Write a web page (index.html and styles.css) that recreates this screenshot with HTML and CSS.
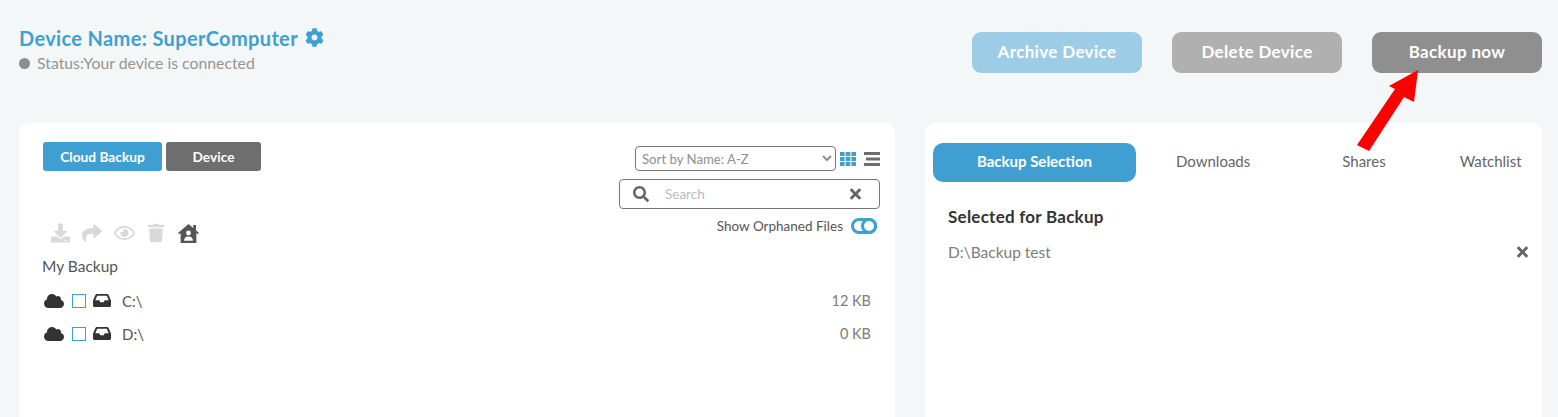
FILE: index.html
```html
<!DOCTYPE html>
<html lang="en">
<head>
<meta charset="utf-8">
<title>Device</title>
<link rel="stylesheet" href="styles.css">
</head>
<body>
<header class="page-head">
  <div class="device">
    <h1 class="device-name">Device Name: SuperComputer
      <svg class="cog" viewBox="0 0 512 512"><path d="M487.4 315.7l-42.6-24.6c4.3-23.2 4.3-47 0-70.2l42.6-24.6c4.9-2.8 7.1-8.6 5.5-14-11.1-35.6-30-67.8-54.7-94.6-3.8-4.1-10-5.1-14.8-2.3L380.8 110c-17.9-15.4-38.5-27.3-60.8-35.1V25.8c0-5.6-3.9-10.5-9.4-11.7-36.7-8.2-74.3-7.8-109.2 0-5.5 1.2-9.4 6.1-9.4 11.7V75c-22.2 7.9-42.8 19.8-60.8 35.1L88.7 85.5c-4.9-2.8-11-1.9-14.8 2.3-24.7 26.7-43.6 58.9-54.7 94.6-1.7 5.4.6 11.2 5.5 14L67.3 221c-4.3 23.2-4.3 47 0 70.2l-42.6 24.6c-4.9 2.8-7.1 8.6-5.5 14 11.1 35.6 30 67.8 54.7 94.6 3.8 4.1 10 5.1 14.8 2.3l42.6-24.6c17.9 15.4 38.5 27.3 60.8 35.1v49.2c0 5.6 3.9 10.5 9.4 11.7 36.7 8.2 74.3 7.8 109.2 0 5.5-1.2 9.4-6.1 9.4-11.7v-49.2c22.2-7.9 42.8-19.8 60.8-35.1l42.6 24.6c4.9 2.8 11 1.9 14.8-2.3 24.7-26.7 43.6-58.9 54.7-94.6 1.5-5.5-.7-11.3-5.6-14.1zM256 336c-44.1 0-80-35.9-80-80s35.9-80 80-80 80 35.9 80 80-35.9 80-80 80z"/></svg>
    </h1>
    <div class="status"><span class="dot"></span>Status:Your device is connected</div>
  </div>
  <div class="actions">
    <button class="action archive">Archive Device</button>
    <button class="action delete">Delete Device</button>
    <button class="action backup">Backup now</button>
  </div>
</header>

<main class="panels">
  <section class="card files">
    <div class="files-top">
      <div class="source-tabs">
        <button class="source on">Cloud Backup</button>
        <button class="source off">Device</button>
      </div>
      <div class="controls">
        <div class="sort-row">
          <select class="sort"><option>Sort by Name: A-Z</option></select>
          <svg class="view" viewBox="0 0 16 14"><path fill="#3f9fd3" d="M0 0h4.600v4H0zM5.700 0h4.600v4H5.700zM11.400 0H16v4h-4.600zM0 5h4.600v4H0zM5.700 5h4.600v4H5.700zM11.400 5H16v4h-4.600zM0 10h4.600v4H0zM5.700 10h4.600v4H5.700zM11.400 10H16v4h-4.600z"/></svg>
          <svg class="view" viewBox="0 0 16 14"><path fill="#6e6e6e" d="M0 0h16v3H0zM2 5.500h14v3H2zM0 11h16v3H0z"/></svg>
        </div>
        <label class="search">
          <svg class="search-icon" viewBox="0 0 512 512"><path d="M505 442.7L405.3 343c-4.5-4.500-10.600-7-17-7H372c27.600-35.300 44-79.700 44-128C416 93.100 322.900 0 208 0S0 93.100 0 208s93.100 208 208 208c48.300 0 92.700-16.400 128-44v16.300c0 6.400 2.500 12.500 7 17l99.700 99.700c9.400 9.400 24.600 9.400 33.900 0l28.300-28.300c9.400-9.400 9.400-24.600.1-34zM208 336c-70.700 0-128-57.200-128-128 0-70.700 57.200-128 128-128 70.700 0 128 57.200 128 128 0 70.700-57.200 128-128 128z"/></svg>
          <input class="search-input" placeholder="Search">
          <svg class="x" viewBox="0 0 352 512"><path d="M242.72 256l100.07-100.07c12.28-12.28 12.28-32.19 0-44.48l-22.24-22.24c-12.28-12.28-32.19-12.28-44.48 0L176 189.28 75.93 89.21c-12.28-12.28-32.19-12.28-44.48 0L9.21 111.45c-12.28 12.28-12.28 32.19 0 44.48L109.28 256 9.21 356.07c-12.28 12.28-12.28 32.19 0 44.48l22.24 22.24c12.28 12.28 32.2 12.28 44.48 0L176 322.72l100.07 100.07c12.28 12.28 32.2 12.28 44.48 0l22.24-22.24c12.28-12.28 12.28-32.19 0-44.48L242.72 256z"/></svg>
        </label>
      </div>
    </div>
    <div class="tools-row">
      <div class="tools">
        <svg class="tool dl" viewBox="0 0 512 512"><path d="M216 0h80c13.3 0 24 10.7 24 24v168h87.7c17.8 0 26.7 21.5 14.1 34.1L269.7 378.3c-7.5 7.5-19.8 7.5-27.3 0L90.1 226.1c-12.6-12.6-3.7-34.1 14.1-34.1H192V24c0-13.3 10.7-24 24-24zm296 376v112c0 13.3-10.7 24-24 24H24c-13.3 0-24-10.7-24-24V376c0-13.3 10.7-24 24-24h146.7l49 49c20.1 20.1 52.5 20.1 72.6 0l49-49H488c13.3 0 24 10.7 24 24zm-124 88c0-11-9-20-20-20s-20 9-20 20 9 20 20 20 20-9 20-20zm64 0c0-11-9-20-20-20s-20 9-20 20 9 20 20 20 20-9 20-20z"/></svg>
        <svg class="tool share" viewBox="0 0 512 512"><path d="M503.691 189.836L327.687 37.851C312.281 24.546 288 35.347 288 56.015v80.053C127.371 137.907 0 170.1 0 322.326c0 61.441 39.581 122.309 83.333 154.132 13.653 9.931 33.111-2.533 28.077-18.631C66.066 312.814 132.917 274.316 288 272.085V360c0 20.7 24.3 31.453 39.687 18.164l176.004-152c11.071-9.562 11.086-26.753 0-36.328z"/></svg>
        <svg class="tool eye" viewBox="0 0 576 512"><path d="M288 144a110.94 110.94 0 0 0-31.24 5 55.4 55.4 0 0 1 7.24 27 56 56 0 0 1-56 56 55.4 55.4 0 0 1-27-7.24A111.71 111.71 0 1 0 288 144zm284.52 97.4C518.29 135.59 410.93 64 288 64S57.68 135.64 3.48 241.41a32.35 32.35 0 0 0 0 29.19C57.71 376.41 165.07 448 288 448s230.32-71.64 284.52-177.41a32.35 32.35 0 0 0 0-29.19zM288 400c-98.65 0-189.09-55-237.93-144C98.91 167 189.34 112 288 112s189.09 55 237.93 144C477.1 345 386.66 400 288 400z"/></svg>
        <svg class="tool trash" viewBox="0 0 448 512"><path d="M432 32H312l-9.4-18.7A24 24 0 0 0 281.1 0H166.8a23.72 23.72 0 0 0-21.4 13.3L136 32H16A16 16 0 0 0 0 48v32a16 16 0 0 0 16 16h416a16 16 0 0 0 16-16V48a16 16 0 0 0-16-16zM53.2 467a48 48 0 0 0 47.9 45h245.8a48 48 0 0 0 47.9-45L416 128H32z"/></svg>
        <svg class="tool home" viewBox="0 0 20 18"><path fill="#555" fill-rule="evenodd" d="M10 0l4.500 3.800V1h2.600v5l2.900 2.500-1 1.200-1.500-1.200V18h-15V8.500L1 9.700 0 8.500zM10 6.200a2.300 2.300 0 1 0 0 4.600 2.300 2.300 0 0 0 0-4.600zM5.800 15.800h8.400c0-2.500-1.500-4-4.200-4s-4.200 1.500-4.200 4z"/></svg>
      </div>
      <div class="orphaned">
        <span>Show Orphaned Files</span>
        <span class="toggle"><span class="knob"></span></span>
      </div>
    </div>
    <div class="crumb">My Backup</div>
    <ul class="drives">
      <li class="drive">
        <svg class="cloud" viewBox="0 0 640 512"><path d="M537.6 226.6c4.1-10.7 6.4-22.4 6.4-34.6 0-53-43-96-96-96-19.7 0-38.1 6-53.3 16.2C367 64.2 315.3 32 256 32c-88.4 0-160 71.6-160 160 0 2.7.1 5.4.2 8.1C40.2 219.8 0 273.2 0 336c0 79.5 64.5 144 144 144h368c70.7 0 128-57.3 128-128 0-61.9-44-113.6-102.4-125.4z"/></svg>
        <span class="check"></span>
        <svg class="inbox" viewBox="0 0 18 13"><path fill-rule="evenodd" d="M4 0h10c.7 0 1.300.4 1.600 1L18 6.500V11.500c0 .8-.7 1.500-1.500 1.500h-15C.7 13 0 12.300 0 11.500V6.500L2.400 1C2.700.4 3.300 0 4 0zM4.200 1.800L2.300 6.300h4l1 2h3.400l1-2h4l-1.900-4.500z"/></svg>
        <span class="drive-name">C:\</span>
        <span class="drive-size">12 KB</span>
      </li>
      <li class="drive">
        <svg class="cloud" viewBox="0 0 640 512"><path d="M537.6 226.6c4.1-10.7 6.4-22.4 6.4-34.6 0-53-43-96-96-96-19.7 0-38.1 6-53.3 16.2C367 64.2 315.3 32 256 32c-88.4 0-160 71.6-160 160 0 2.7.1 5.4.2 8.1C40.2 219.8 0 273.2 0 336c0 79.5 64.5 144 144 144h368c70.7 0 128-57.3 128-128 0-61.9-44-113.6-102.4-125.4z"/></svg>
        <span class="check"></span>
        <svg class="inbox" viewBox="0 0 18 13"><path fill-rule="evenodd" d="M4 0h10c.7 0 1.300.4 1.600 1L18 6.500V11.500c0 .8-.7 1.500-1.500 1.500h-15C.7 13 0 12.300 0 11.500V6.500L2.400 1C2.700.4 3.300 0 4 0zM4.200 1.800L2.300 6.300h4l1 2h3.400l1-2h4l-1.900-4.500z"/></svg>
        <span class="drive-name">D:\</span>
        <span class="drive-size">0 KB</span>
      </li>
    </ul>
  </section>

  <section class="card selection">
    <nav class="tabs">
      <a class="tab active">Backup Selection</a>
      <a class="tab downloads">Downloads</a>
      <a class="tab shares">Shares</a>
      <a class="tab watchlist">Watchlist</a>
    </nav>
    <div class="selected">
      <h2 class="selected-title">Selected for Backup</h2>
      <div class="selected-row">
        <span>D:\Backup test</span>
        <svg class="x" viewBox="0 0 352 512"><path d="M242.72 256l100.07-100.07c12.28-12.28 12.28-32.19 0-44.48l-22.24-22.24c-12.28-12.28-32.19-12.28-44.48 0L176 189.28 75.93 89.21c-12.28-12.28-32.19-12.28-44.48 0L9.21 111.45c-12.28 12.28-12.28 32.19 0 44.48L109.28 256 9.21 356.07c-12.28 12.28-12.28 32.19 0 44.48l22.24 22.24c12.28 12.28 32.2 12.28 44.48 0L176 322.72l100.07 100.07c12.28 12.28 32.2 12.28 44.48 0l22.24-22.24c12.28-12.28 12.28-32.19 0-44.48L242.72 256z"/></svg>
      </div>
    </div>
  </section>
</main>

<svg class="arrow" viewBox="0 0 63 81"><polygon fill="#ff0000" points="62,0 58,32 48,27 13,81 1,75 39,19 33,16"/></svg>
</body>
</html>
```

FILE: styles.css
```css
* { box-sizing: border-box; }
html, body { margin: 0; height: 417px; overflow: hidden; }
body {
  position: relative;
  background: #f4f7f8;
  font-family: "Lato", "Open Sans", sans-serif;
  color: #555;
}
button { font-family: inherit; border: 0; color: #fff; font-weight: 700; }

.page-head {
  display: flex;
  justify-content: space-between;
  height: 123px;
  padding: 27px 16px 0 19px;
}
.device-name {
  display: flex;
  align-items: center;
  gap: 7px;
  margin: 0;
  height: 23px;
  font-size: 20px;
  letter-spacing: .35px;
  line-height: 23px;
  font-weight: 700;
  color: #3f9fd3;
}
.cog { width: 19px; height: 19px; fill: #3f9fd3; margin-top: -2px; }
.status {
  display: flex;
  align-items: center;
  margin-top: 3px;
  font-size: 15.800px;
  line-height: 20px;
  color: #98938e;
}
.dot {
  width: 11px;
  height: 11px;
  border-radius: 50%;
  background: #8d8d8d;
  margin-right: 7px;
}
.actions { display: flex; gap: 30px; padding-top: 5px; }
.action {
  width: 170px;
  height: 41px;
  padding-bottom: 3px;
  border-radius: 9px;
  font-size: 17px;
  letter-spacing: .35px;
}
.archive { background: #9ccce6; }
.delete { background: #b0b0b1; }
.backup { background: #8f8f8f; }

.panels {
  display: grid;
  grid-template-columns: 876px 617px;
  gap: 30px;
  padding-left: 19px;
}
.card { background: #fff; border-radius: 10px; height: 310px; }

.files { padding: 19px 15px 0 24px; }
.files-top { display: flex; justify-content: space-between; align-items: flex-start; }
.source-tabs { display: flex; gap: 4px; }
.source {
  height: 29px;
  padding-bottom: 2px;
  border-radius: 3px;
  font-size: 13.700px;
}
.source.on { width: 119px; background: #3f9fd3; }
.source.off { width: 95px; background: #6e6e6e; }
.controls { display: flex; flex-direction: column; align-items: flex-end; gap: 8px; padding-top: 4px; }
.sort-row { display: flex; align-items: center; gap: 8px; height: 25px; }
.sort-row .view { width: 16px; height: 14px; margin-left: -4px; }
.sort-row .view + .view { margin-left: 0; }
.sort {
  width: 201px;
  height: 25px;
  padding: 0 2px;
  border: 1px solid #777;
  border-radius: 4px;
  background: #fff;
  font-family: inherit;
  font-size: 13.200px;
  color: #8f8f8f;
}
.search {
  display: flex;
  align-items: center;
  width: 261px;
  height: 30px;
  padding: 0 18px 0 13px;
  border: 1px solid #777;
  border-radius: 4px;
}
.search-icon { width: 16px; height: 16px; fill: #666; }
.search-input {
  flex: 1;
  min-width: 0;
  margin-left: 14px;
  border: 0;
  outline: 0;
  background: transparent;
  font-family: inherit;
  font-size: 13.500px;
}
.search-input::placeholder { color: #bbb; opacity: 1; }
.x { width: 11px; height: 16px; fill: #666; }

.tools-row { display: flex; justify-content: space-between; align-items: flex-start; margin-top: 8px; height: 33px; }
.tools { display: flex; align-items: center; gap: 12px; padding: 6px 0 0 8px; }
.tool { height: 20px; fill: #d9d9d9; }
.dl { width: 19px; }
.share { width: 20px; }
.eye { width: 21px; }
.trash { width: 16px; margin-left: 1px; }
.home { width: 21px; height: 19px; margin-left: 2px; }
.orphaned { display: flex; align-items: center; gap: 8px; height: 18px; padding-right: 3px; font-size: 13.500px; color: #555; }
.toggle {
  display: block;
  width: 26px;
  height: 16px;
  border: 3px solid #3f9fd3;
  border-radius: 8px;
  background: #fff;
  position: relative;
}
.knob {
  position: absolute;
  right: -3px;
  top: -3px;
  width: 16px;
  height: 16px;
  border: 3px solid #3f9fd3;
  border-radius: 50%;
  background: #fff;
}
.crumb { margin-left: -1px; padding-top: 6px; font-size: 15.500px; line-height: 20px; color: #555; }
.drives { list-style: none; margin: 8px 0 0; padding: 0; }
.drive { display: flex; align-items: center; height: 33px; font-size: 15px; color: #555; }
.cloud { width: 20px; height: 16px; fill: #333; margin-left: 1px; }
.check { width: 14px; height: 14px; border: 1px solid #3f9fd3; margin-left: 8px; }
.inbox { width: 18px; height: 13px; fill: #333; margin-left: 7px; }
.drive-name { margin-left: 11px; }
.drive-size { margin-left: auto; font-size: 14.500px; color: #807c78; padding-right: 9px; }

.selection { padding: 20px 14px 0 8px; }
.tabs { display: flex; align-items: center; height: 39px; font-size: 15px; color: #666; }
.tab { display: block; padding-bottom: 4px; }
.tab.active {
  width: 203px;
  padding-bottom: 0;
  line-height: 37px;
  height: 39px;
  text-align: center;
  border-radius: 10px;
  background: #3f9fd3;
  color: #fff;
  font-weight: 700;
}
.downloads { margin-left: 40px; }
.shares { margin-left: 92px; }
.watchlist { margin-left: 74px; }
.selected { padding: 25px 0 0 15px; }
.selected-title { margin: 0; font-size: 17px; letter-spacing: .25px; line-height: 20px; font-weight: 700; color: #333; }
.selected-row { display: flex; justify-content: space-between; align-items: center; margin-top: 16px; font-size: 15.500px; color: #7d7d7d; }
.arrow { position: absolute; left: 1356px; top: 70px; width: 63px; height: 81px; }
```
